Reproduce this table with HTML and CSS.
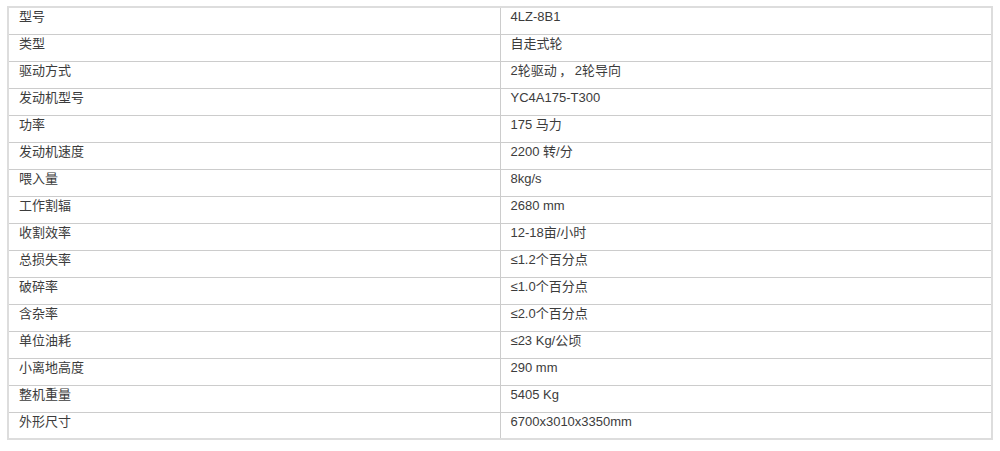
FILE: index.html
```html
<!DOCTYPE html>
<html lang="zh">
<head>
<meta charset="utf-8">
<link rel="stylesheet" href="styles.css">
</head>
<body>
<table class="spec">
<tbody>
<tr><td class="k">型号</td><td class="v">4LZ-8B1</td></tr>
<tr><td class="k">类型</td><td class="v">自走式轮</td></tr>
<tr><td class="k">驱动方式</td><td class="v">2轮驱动<span class="fw">，</span>2轮导向</td></tr>
<tr><td class="k">发动机型号</td><td class="v">YC4A175-T300</td></tr>
<tr><td class="k">功率</td><td class="v">175 马力</td></tr>
<tr><td class="k">发动机速度</td><td class="v">2200 转/分</td></tr>
<tr><td class="k">喂入量</td><td class="v">8kg/s</td></tr>
<tr><td class="k">工作割辐</td><td class="v">2680 mm</td></tr>
<tr><td class="k">收割效率</td><td class="v">12-18亩/小时</td></tr>
<tr><td class="k">总损失率</td><td class="v">≤1.2个百分点</td></tr>
<tr><td class="k">破碎率</td><td class="v">≤1.0个百分点</td></tr>
<tr><td class="k">含杂率</td><td class="v">≤2.0个百分点</td></tr>
<tr><td class="k">单位油耗</td><td class="v">≤23 Kg/公顷</td></tr>
<tr><td class="k">小离地高度</td><td class="v">290 mm</td></tr>
<tr><td class="k">整机重量</td><td class="v">5405 Kg</td></tr>
<tr><td class="k">外形尺寸</td><td class="v">6700x3010x3350mm</td></tr>
</tbody>
</table>
</body>
</html>
```

FILE: styles.css
```css
html, body {
  margin: 0;
  padding: 0;
  background: #fff;
}
body {
  padding: 6px 0 0 7px;
  font-family: "Liberation Sans", "Noto Sans CJK SC", sans-serif;
  font-size: 13px;
  color: #3c3c3c;
}
.spec {
  width: 986px;
  border-collapse: collapse;
  border: 2px solid #ddd;
  table-layout: fixed;
}
.spec td {
  border: 1px solid #ccc;
  height: 27px;
  box-sizing: border-box;
  padding: 0 10px;
  vertical-align: top;
  line-height: 18px;
}
.spec .k {
  width: 492px;
}
.fw {
  display: inline-block;
  width: 18px;
  text-align: center;
}
```
